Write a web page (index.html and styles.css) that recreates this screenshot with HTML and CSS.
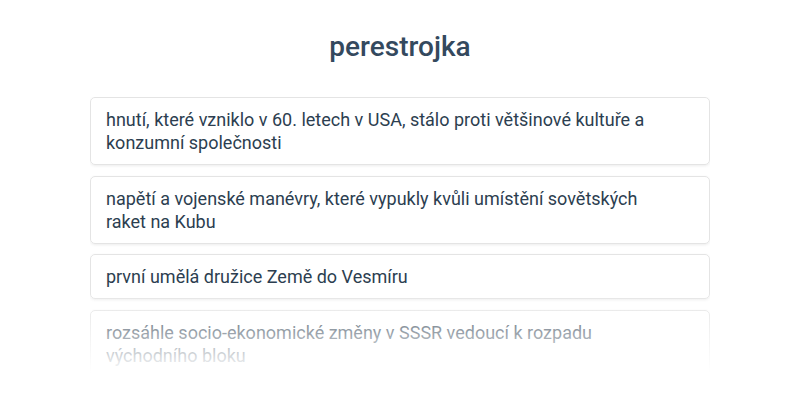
FILE: index.html
```html
<!DOCTYPE html>
<html lang="cs">
<head>
    <meta charset="UTF-8">
    <title>perestrojka</title>
    <link rel="stylesheet" href="styles.css">
</head>
<body>
    <div class="quiz">
        <h1 class="term">perestrojka</h1>

        <div class="options">
            <div class="option">hnutí, které vzniklo v 60. letech v USA, stálo proti většinové kultuře a konzumní společnosti</div>
            <div class="option">napětí a vojenské manévry, které vypukly kvůli umístění sovětských raket na Kubu</div>
            <div class="option">první umělá družice Země do Vesmíru</div>
            <div class="option">rozsáhle socio-ekonomické změny v SSSR vedoucí k rozpadu východního bloku</div>
        </div>
    </div>
</body>
</html>
```

FILE: styles.css
```css
body {
    font-family: Roboto, "Liberation Sans", sans-serif;
    background-color: #fff;
    color: #2c3e50;
    margin: 0;
    padding: 0;
}

.quiz {
    width: 620px;
    margin: 0 auto;
}

.term {
    text-align: center;
    font-size: 28px;
    font-weight: 500;
    color: #34495e;
    margin: 0;
    padding-top: 31px;
    line-height: 32px;
    height: 66px;
}

.options {
    position: relative;
    height: 303px;
    overflow: hidden;
}

/* fade out the list towards the bottom */
.options::after {
    content: "";
    position: absolute;
    left: -10px;
    right: -10px;
    top: 192px;
    bottom: 0;
    background: linear-gradient(to bottom, rgba(255, 255, 255, 0) 0, #fff 84px);
}

.option {
    border: 1px solid #e4e4e4;
    border-radius: 5px;
    box-shadow: 0 1px 3px rgba(0, 0, 0, 0.08);
    padding: 10px 60px 10px 15px;
    margin-bottom: 10.5px;
    font-size: 18px;
    line-height: 23px;
}
```
